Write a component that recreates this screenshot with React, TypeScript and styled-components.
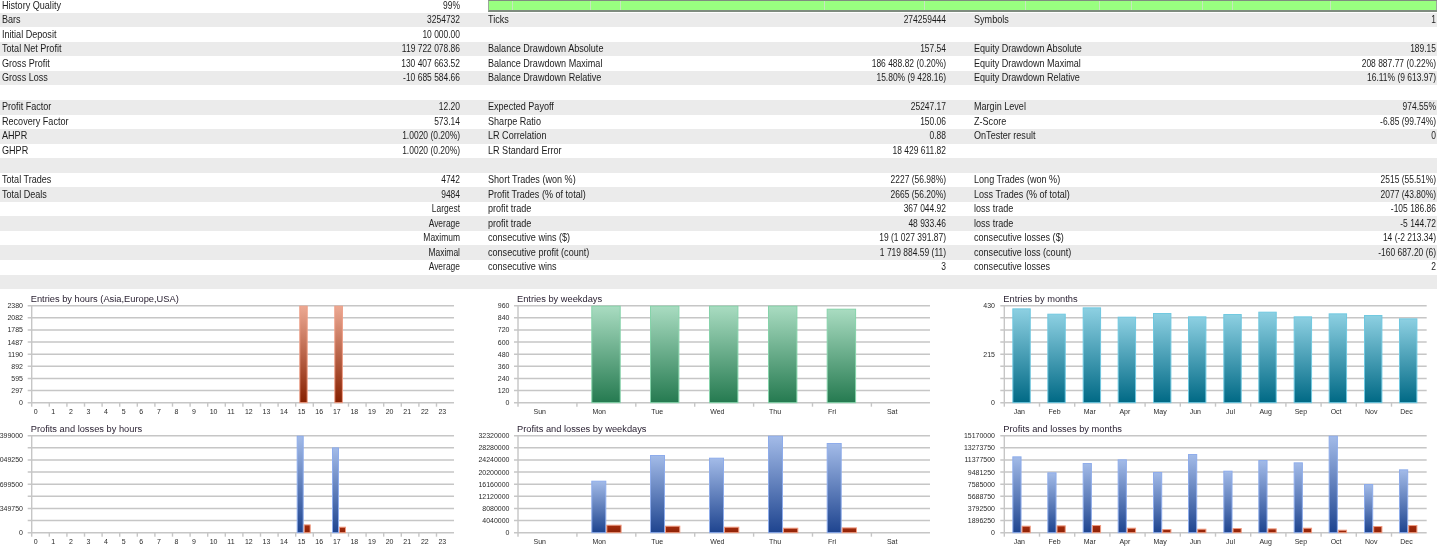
import React, { useId } from "react";
import styled, { createGlobalStyle } from "styled-components";

const GlobalStyle = createGlobalStyle`
  html, body {
    margin: 0;
    padding: 0;
    background: #fff;
  }
`;

const Page = styled.div`
  width: 1445px;
  height: 560px;
  overflow: hidden;
  background: #fff;
  color: #1c1c1c;
  font-family: "Liberation Sans", Arial, sans-serif;
  filter: blur(0.3px);
`;

const Table = styled.div`
  display: flex;
  flex-direction: column;
  width: 1437px;
`;

const Row = styled.div<{ $striped: boolean; $first?: boolean }>`
  display: grid;
  grid-template-columns: 242px 244px 220px 266px 220px 243px;
  align-items: center;
  height: ${({ $first }) => ($first ? "12.7px" : "14.55px")};
  padding-left: 2px;
  box-sizing: border-box;
  background: ${({ $striped }) => ($striped ? "#ebebeb" : "#fff")};
  font-size: 10.2px;
  line-height: 12px;
  white-space: nowrap;
`;

// the terminal's font is narrower than anything installed, so squeeze the text
const Label = styled.div`
  transform: scaleX(0.89);
  transform-origin: left center;
`;

const Value = styled.div`
  text-align: right;
  padding-right: 28px;
  transform: scaleX(0.83);
  transform-origin: calc(100% - 28px) center;

  &:last-child {
    padding-right: 1px;
    transform-origin: calc(100% - 1px) center;
  }
`;

const QualityBar = styled.div`
  grid-column: 3 / 7;
  display: flex;
  align-self: start;
  height: 11.5px;
  box-sizing: border-box;
  border-top: 1px solid #7f8c7f;
  border-bottom: 2px solid #7f8c7f;
  border-left: 1px solid #9aa89a;
`;

const QualitySegment = styled.div<{ $grow: number }>`
  flex: ${({ $grow }) => $grow} 0 0;
  background: #99ff80;
  border-right: 1px solid #c6e8bd;

  &:last-child {
    border-right: 1px solid #9aa89a;
  }
`;

const ChartGrid = styled.div`
  display: grid;
  grid-template-columns: 486px 486px 473px;
  grid-auto-rows: 130.6px;
  padding-top: 1.8px;
`;

const ChartSvg = styled.svg`
  display: block;
  overflow: visible;
`;

const ChartTitle = styled.text`
  font-family: "Liberation Sans", Arial, sans-serif;
  font-size: 9.3px;
  fill: #2b2233;
`;

const AxisText = styled.text`
  font-family: "Liberation Sans", Arial, sans-serif;
  font-size: 7px;
  fill: #2a2a2a;
`;

const GridLine = styled.line`
  stroke: #c6c6c6;
  stroke-width: 1.4;
`;

type RowData = [string, string, string?, string?, string?, string?];

const ROWS: RowData[] = [
  ["Bars", "3254732", "Ticks", "274259444", "Symbols", "1"],
  ["Initial Deposit", "10 000.00"],
  ["Total Net Profit", "119 722 078.86", "Balance Drawdown Absolute", "157.54", "Equity Drawdown Absolute", "189.15"],
  ["Gross Profit", "130 407 663.52", "Balance Drawdown Maximal", "186 488.82 (0.20%)", "Equity Drawdown Maximal", "208 887.77 (0.22%)"],
  ["Gross Loss", "-10 685 584.66", "Balance Drawdown Relative", "15.80% (9 428.16)", "Equity Drawdown Relative", "16.11% (9 613.97)"],
  ["", ""],
  ["Profit Factor", "12.20", "Expected Payoff", "25247.17", "Margin Level", "974.55%"],
  ["Recovery Factor", "573.14", "Sharpe Ratio", "150.06", "Z-Score", "-6.85 (99.74%)"],
  ["AHPR", "1.0020 (0.20%)", "LR Correlation", "0.88", "OnTester result", "0"],
  ["GHPR", "1.0020 (0.20%)", "LR Standard Error", "18 429 611.82"],
  ["", ""],
  ["Total Trades", "4742", "Short Trades (won %)", "2227 (56.98%)", "Long Trades (won %)", "2515 (55.51%)"],
  ["Total Deals", "9484", "Profit Trades (% of total)", "2665 (56.20%)", "Loss Trades (% of total)", "2077 (43.80%)"],
  ["", "Largest", "profit trade", "367 044.92", "loss trade", "-105 186.86"],
  ["", "Average", "profit trade", "48 933.46", "loss trade", "-5 144.72"],
  ["", "Maximum", "consecutive wins ($)", "19 (1 027 391.87)", "consecutive losses ($)", "14 (-2 213.34)"],
  ["", "Maximal", "consecutive profit (count)", "1 719 884.59 (11)", "consecutive loss (count)", "-160 687.20 (6)"],
  ["", "Average", "consecutive wins", "3", "consecutive losses", "2"],
  ["", ""],
];

// distances between the pale marks on the quality bar
const QUALITY_SEGMENTS = [23, 78, 30, 206, 100, 101, 74, 32, 71, 29, 99, 106];

const TOP = 14.7;
const BOTTOM = 111.7;
const HOURS = Array.from({ length: 24 }, (_, i) => String(i));
const DAYS = ["Sun", "Mon", "Tue", "Wed", "Thu", "Fri", "Sat"];
const MONTHS = ["Jan", "Feb", "Mar", "Apr", "May", "Jun", "Jul", "Aug", "Sep", "Oct", "Nov", "Dec"];

const PALETTE = {
  red: { top: "#eca993", bottom: "#872000", stroke: "#ee9e86" },
  green: { top: "#a9dcc1", bottom: "#257a50", stroke: "#86d3aa" },
  teal: { top: "#8dd0e2", bottom: "#006985", stroke: "#70c8e0" },
  blue: { top: "#a3bbe8", bottom: "#1e448f", stroke: "#8eaceb" },
  loss: { top: "#a32c0e", bottom: "#8e2206", stroke: "#ee9a80" },
};

type Colour = keyof typeof PALETTE;

interface Bar {
  x: number;
  width: number;
  height: number;
  colour: Colour;
}

interface ChartProps {
  title: string;
  left: number;
  right: number;
  yLabels: string[];
  labelRight: number;
  cells: string[];
  cellWidth: number;
  labelOffset: number;
  labelAnchor?: "start" | "middle";
  bars: Bar[];
}

const Chart: React.FC<ChartProps> = ({
  title,
  left,
  right,
  yLabels,
  labelRight,
  cells,
  cellWidth,
  labelOffset,
  labelAnchor = "start",
  bars,
}) => {
  const id = useId();
  const step = (BOTTOM - TOP) / 8;
  return (
    <ChartSvg width={486} height={130.6} viewBox="0 0 486 130.6">
      <defs>
        {(Object.keys(PALETTE) as Colour[]).map((name) => (
          <linearGradient key={name} id={`${id}${name}`} x1="0" y1="0" x2="0" y2="1">
            <stop offset="0" stopColor={PALETTE[name].top} />
            <stop offset="1" stopColor={PALETTE[name].bottom} />
          </linearGradient>
        ))}
      </defs>
      <ChartTitle x={left - 1} y={11}>
        {title}
      </ChartTitle>
      {yLabels.map((label, i) => {
        const y = TOP + step * i;
        return (
          <g key={i}>
            <GridLine x1={left - 4} x2={right} y1={y} y2={y} />
            {label && (
              <AxisText x={labelRight} y={y + 2.5} textAnchor="end">
                {label}
              </AxisText>
            )}
          </g>
        );
      })}
      <GridLine x1={left} x2={left} y1={TOP} y2={BOTTOM + 4} />
      {cells.map((cell, i) => {
        const x = left + cellWidth * i;
        return (
          <g key={cell}>
            {i > 0 && <GridLine x1={x} x2={x} y1={BOTTOM} y2={BOTTOM + 4} />}
            <AxisText x={x + labelOffset} y={123.2} textAnchor={labelAnchor}>
              {cell}
            </AxisText>
          </g>
        );
      })}
      {bars.map((bar, i) => (
        <rect
          key={i}
          x={bar.x + 0.5}
          y={BOTTOM - bar.height + 0.5}
          width={bar.width - 1}
          height={bar.height - 0.5}
          fill={`url(#${id}${bar.colour})`}
          stroke={PALETTE[bar.colour].stroke}
          strokeWidth={1}
        />
      ))}
    </ChartSvg>
  );
};

const FULL = BOTTOM - TOP;

const hourEntries: Bar[] = [
  { x: 299.3, width: 8.4, height: FULL, colour: "red" },
  { x: 334.3, width: 8.6, height: FULL, colour: "red" },
];

const hourProfits: Bar[] = [
  { x: 296.7, width: 7, height: FULL, colour: "blue" },
  { x: 303.7, width: 7, height: 8.3, colour: "loss" },
  { x: 332, width: 7, height: 85.3, colour: "blue" },
  { x: 339, width: 7, height: 6, colour: "loss" },
];

const dayEntries: Bar[] = [
  [105.3, FULL],
  [164, FULL],
  [223, FULL],
  [282, FULL],
  [340.7, 94],
].map(([x, height]) => ({ x, width: 29.4, height, colour: "green" as Colour }));

const dayProfits: Bar[] = [
  [105.3, 52, 8],
  [164, 77.7, 7],
  [223, 75, 6],
  [282, FULL, 5],
  [340.7, 89.7, 5.3],
].flatMap(([x, profit, loss]) => [
  { x, width: 15, height: profit, colour: "blue" as Colour },
  { x: x + 15, width: 15.3, height: loss, colour: "loss" as Colour },
]);

const MONTH_X = [157, 262, 368, 473, 579, 684, 790, 895, 1001, 1106, 1212, 1317];
const MONTH_ENTRY_TOP = [70, 86, 67, 95, 84, 94, 87, 80, 94, 85, 90, 100];
const MONTH_PROFIT_TOP = [111, 159, 131, 120, 158, 104, 154, 122, 129, 49, 194, 150];
const MONTH_LOSS_TOP = [319, 318, 317, 325, 329, 328, 326, 327, 325, 331, 320, 317];

const monthEntries: Bar[] = MONTH_X.map((x, i) => ({
  x: x / 3 - 12,
  width: 18.4,
  height: (353 - MONTH_ENTRY_TOP[i]) / 3,
  colour: "teal",
}));

const monthProfits: Bar[] = MONTH_X.flatMap((x, i) => [
  { x: x / 3 - 12, width: 9.2, height: (340 - MONTH_PROFIT_TOP[i]) / 3, colour: "blue" as Colour },
  { x: x / 3 - 2.8, width: 9.2, height: (340 - MONTH_LOSS_TOP[i]) / 3, colour: "loss" as Colour },
]);

const App: React.FC = () => (
  <Page>
    <GlobalStyle />
    <Table>
      <Row $striped={false} $first>
        <Label>History Quality</Label>
        <Value>99%</Value>
        <QualityBar>
          {QUALITY_SEGMENTS.map((grow, i) => (
            <QualitySegment key={i} $grow={grow} />
          ))}
        </QualityBar>
      </Row>
      {ROWS.map((cells, i) => (
        <Row key={i} $striped={i % 2 === 0}>
          <Label>{cells[0]}</Label>
          <Value>{cells[1]}</Value>
          <Label>{cells[2]}</Label>
          <Value>{cells[3]}</Value>
          <Label>{cells[4]}</Label>
          <Value>{cells[5]}</Value>
        </Row>
      ))}
    </Table>
    <ChartGrid>
      <Chart
        title="Entries by hours (Asia,Europe,USA)"
        left={31.7}
        right={454}
        labelRight={23}
        yLabels={["2380", "2082", "1785", "1487", "1190", "892", "595", "297", "0"]}
        cells={HOURS}
        cellWidth={17.6}
        labelOffset={2}
        bars={hourEntries}
      />
      <Chart
        title="Entries by weekdays"
        left={32}
        right={444}
        labelRight={23.5}
        yLabels={["960", "840", "720", "600", "480", "360", "240", "120", "0"]}
        cells={DAYS}
        cellWidth={58.9}
        labelOffset={15.5}
        bars={dayEntries}
      />
      <Chart
        title="Entries by months"
        left={32.3}
        right={454.7}
        labelRight={23}
        yLabels={["430", "", "", "", "215", "", "", "", "0"]}
        cells={MONTHS}
        cellWidth={35.2}
        labelOffset={15}
        labelAnchor="middle"
        bars={monthEntries}
      />
      <Chart
        title="Profits and losses by hours"
        left={31.7}
        right={454}
        labelRight={23}
        yLabels={["399000", "", "049250", "", "699500", "", "349750", "", "0"]}
        cells={HOURS}
        cellWidth={17.6}
        labelOffset={2}
        bars={hourProfits}
      />
      <Chart
        title="Profits and losses by weekdays"
        left={32}
        right={444}
        labelRight={23.5}
        yLabels={["32320000", "28280000", "24240000", "20200000", "16160000", "12120000", "8080000", "4040000", "0"]}
        cells={DAYS}
        cellWidth={58.9}
        labelOffset={15.5}
        bars={dayProfits}
      />
      <Chart
        title="Profits and losses by months"
        left={32.3}
        right={454.7}
        labelRight={23}
        yLabels={["15170000", "13273750", "11377500", "9481250", "7585000", "5688750", "3792500", "1896250", "0"]}
        cells={MONTHS}
        cellWidth={35.2}
        labelOffset={15}
        labelAnchor="middle"
        bars={monthProfits}
      />
    </ChartGrid>
  </Page>
);

export default App;
